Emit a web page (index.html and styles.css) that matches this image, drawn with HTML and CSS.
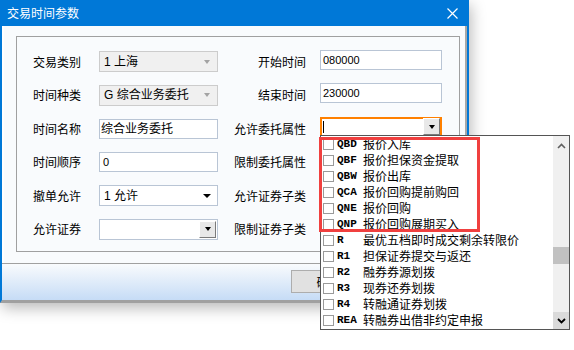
FILE: index.html
```html
<!DOCTYPE html>
<html lang="zh-CN">
<head>
  <meta charset="UTF-8">
  <title>交易时间参数</title>
  <link rel="stylesheet" href="styles.css">
</head>
<body>
  <div class="dialog">
    <div class="titlebar">
      <span class="title">交易时间参数</span>
      <svg class="close" width="11" height="11" viewBox="0 0 11 11">
        <path d="M0.5 0.5 L10.5 10.5 M10.5 0.5 L0.5 10.5" stroke="#fff" stroke-width="1.2" fill="none"/>
      </svg>
    </div>

    <div class="frame">
      <div class="content">
        <div class="group">
          <div class="form">
            <!-- row 1 -->
            <span class="label">交易类别</span>
            <div class="field disabled"><span class="val">1 上海</span><i class="arrow grey"></i></div>
            <span class="label right">开始时间</span>
            <div class="tfield">080000</div>

            <!-- row 2 -->
            <span class="label">时间种类</span>
            <div class="field disabled"><span class="val">G 综合业务委托</span><i class="arrow grey"></i></div>
            <span class="label right">结束时间</span>
            <div class="tfield">230000</div>

            <!-- row 3 -->
            <span class="label">时间名称</span>
            <div class="field text"><span class="val">综合业务委托</span></div>
            <span class="label right">允许委托属性</span>
            <div class="tfield focus"><i class="caret"></i><span class="btn"><i class="arrow"></i></span></div>

            <!-- row 4 -->
            <span class="label">时间顺序</span>
            <div class="field text"><span class="val num">0</span></div>
            <span class="label right">限制委托属性</span>
            <div class="tfield"><span class="btn"><i class="arrow"></i></span></div>

            <!-- row 5 -->
            <span class="label">撤单允许</span>
            <div class="field"><span class="val">1 允许</span><i class="arrow black"></i></div>
            <span class="label right">允许证券子类</span>
            <div class="tfield"><span class="btn"><i class="arrow"></i></span></div>

            <!-- row 6 -->
            <span class="label">允许证券</span>
            <div class="field pick"><span class="val"></span><span class="btn"><i class="arrow"></i></span></div>
            <span class="label right">限制证券子类</span>
            <div class="tfield"><span class="btn"><i class="arrow"></i></span></div>
          </div>
        </div>
      </div>

      <div class="footer">
        <button class="button">确定</button>
        <button class="button ghost"></button>
      </div>
    </div>

    <!-- open dropdown of 允许委托属性 -->
    <div class="list">
      <div class="items">
        <div class="item"><i class="cb"></i><span class="code">QBD</span><span class="name">报价入库</span></div>
        <div class="item"><i class="cb"></i><span class="code">QBF</span><span class="name">报价担保资金提取</span></div>
        <div class="item"><i class="cb"></i><span class="code">QBW</span><span class="name">报价出库</span></div>
        <div class="item"><i class="cb"></i><span class="code">QCA</span><span class="name">报价回购提前购回</span></div>
        <div class="item"><i class="cb"></i><span class="code">QNE</span><span class="name">报价回购</span></div>
        <div class="item"><i class="cb"></i><span class="code">QNP</span><span class="name">报价回购展期买入</span></div>
        <div class="item"><i class="cb"></i><span class="code">R</span><span class="name">最优五档即时成交剩余转限价</span></div>
        <div class="item"><i class="cb"></i><span class="code">R1</span><span class="name">担保证券提交与返还</span></div>
        <div class="item"><i class="cb"></i><span class="code">R2</span><span class="name">融券券源划拨</span></div>
        <div class="item"><i class="cb"></i><span class="code">R3</span><span class="name">现券还券划拨</span></div>
        <div class="item"><i class="cb"></i><span class="code">R4</span><span class="name">转融通证券划拨</span></div>
        <div class="item"><i class="cb"></i><span class="code">REA</span><span class="name">转融券出借非约定申报</span></div>
      </div>
      <div class="scroll">
        <div class="sb-up">
          <svg width="9" height="6" viewBox="0 0 9 6"><path d="M1 5 L4.5 1.5 L8 5" stroke="#606060" stroke-width="1.6" fill="none"/></svg>
        </div>
        <div class="sb-track"><div class="sb-thumb"></div></div>
        <div class="sb-down">
          <svg width="9" height="6" viewBox="0 0 9 6"><path d="M1 1 L4.5 4.5 L8 1" stroke="#000" stroke-width="1.8" fill="none"/></svg>
        </div>
      </div>
    </div>

    <div class="highlight"></div>
  </div>
</body>
</html>
```

FILE: styles.css
```css
* {
  box-sizing: border-box;
}
html {
  background-color: #fff;
}
body {
  margin: 0;
  min-height: 350px;
  padding-bottom: 1px;
  background-color: #fff;
  font-family: "Noto Sans CJK SC", sans-serif;
  font-size: 12px;
  line-height: 16px;
  color: #000;
}
.dialog {
  position: relative;
  width: 469px;
  background-color: #f9fbfd;
  border-left: 2px solid #0078d7;
  border-right: 2px solid #0078d7;
  border-bottom: 3px solid #a0a0a0;
  box-shadow: 2px 5px 14px rgba(0, 0, 0, 0.28);
}
.titlebar {
  height: 26px;
  margin: 0 -2px;
  background-color: #0078d7;
  color: #fff;
  display: flex;
  align-items: center;
  justify-content: space-between;
  padding: 0 11px 0 7px;
}
.title {
  font-size: 12px;
}
.frame {
  box-shadow: inset 2px 0 0 #fff, inset -2px 0 0 #a8a8a8;
}
.content {
  padding: 10px 7px 11px 14px;
}
.group {
  height: 216px;
  border: 1px solid #a0a0a0;
}
.form {
  display: grid;
  grid-template-columns: 66px 119px 102px 122px;
  grid-auto-rows: 33.5px;
  align-items: center;
  padding: 8px 0 0 16px;
}
.label {
  white-space: nowrap;
}
.label.right {
  text-align: right;
  padding-right: 14px;
}
.field {
  height: 21px;
  border: 1px solid #b9c5d5;
  background-color: #fff;
  display: flex;
  align-items: center;
  padding-left: 4px;
}
.field.disabled {
  background-color: #f0f0f0;
  border-color: #cccccc;
}
.field.text {
  height: 20px;
  padding-left: 1px;
}
.field .val {
  flex: 1;
  white-space: nowrap;
  font-family: "Liberation Sans", "Noto Sans CJK SC", sans-serif;
}
.val.num {
  font-size: 11px;
  padding-left: 2px;
}
.arrow {
  display: block;
  width: 0;
  height: 0;
  border-left: 4px solid transparent;
  border-right: 4px solid transparent;
  border-top: 4px solid #000;
}
.arrow.grey {
  border-left-width: 3.5px;
  border-right-width: 3.5px;
  border-top-color: #a3a3a3;
  margin-right: 7px;
}
.arrow.black {
  margin-right: 6px;
}
.field.pick {
  height: 21px;
  padding: 1px;
}
.btn {
  width: 17px;
  height: 17px;
  background-color: #e8e8e8;
  border: 1px solid;
  border-color: #fff #7a7a7a #7a7a7a #fff;
  display: flex;
  align-items: center;
  justify-content: center;
}
.btn .arrow {
  border-left-width: 3.5px;
  border-right-width: 3.5px;
}
.tfield {
  height: 20px;
  margin-bottom: 4px;
  border: 1px solid #b9c5d5;
  background-color: #fff;
  font-family: "Liberation Sans", sans-serif;
  font-size: 11px;
  padding-left: 2px;
  display: flex;
  align-items: center;
}
.tfield .btn {
  margin-left: auto;
  margin-right: 1px;
}
.tfield.focus {
  border: 2px solid #ff8000;
  padding-left: 1px;
}
.tfield.focus .btn {
  margin-right: 0;
}
.caret {
  display: block;
  width: 1px;
  height: 12px;
  background-color: #000;
}
.footer {
  height: 37px;
  border-top: 1px solid #a0a0a0;
  background: linear-gradient(#f9fbfd, #c6dcf6);
  display: flex;
  justify-content: flex-end;
  align-items: flex-start;
  gap: 9px;
  padding: 6px 17px 0 0;
}
.button {
  width: 75px;
  height: 23px;
  background-color: #e1e1e1;
  border: 1px solid #adadad;
  font-family: "Noto Sans CJK SC", sans-serif;
  font-size: 12px;
  padding: 0;
}

/* dropdown list */
.list {
  position: absolute;
  left: 318px;
  top: 135px;
  width: 250px;
  height: 195px;
  border: 1px solid #555;
  background-color: #fff;
  display: flex;
  z-index: 2;
}
.items {
  flex: 1;
}
.item {
  height: 16px;
  display: flex;
  align-items: center;
  padding-left: 2px;
  white-space: nowrap;
}
.cb {
  display: block;
  width: 11px;
  height: 11px;
  border: 1px solid #9a9a9a;
  background-color: #fff;
  margin-right: 3px;
}
.code {
  width: 26px;
  font-family: "Liberation Mono", monospace;
  font-size: 11px;
  font-weight: bold;
}
.scroll {
  width: 16px;
  background-color: #f0f0f0;
  display: flex;
  flex-direction: column;
}
.sb-up {
  height: 20px;
  display: flex;
  align-items: center;
  justify-content: center;
}
.sb-track {
  flex: 1;
}
.sb-thumb {
  height: 17px;
  margin-top: 91px;
  background-color: #c1c1c1;
}
.sb-down {
  height: 17px;
  background-color: #dadada;
  display: flex;
  align-items: center;
  justify-content: center;
}
.highlight {
  position: absolute;
  left: 317px;
  top: 137px;
  width: 161px;
  height: 95px;
  border: 3px solid #f0403f;
  z-index: 3;
}
```
